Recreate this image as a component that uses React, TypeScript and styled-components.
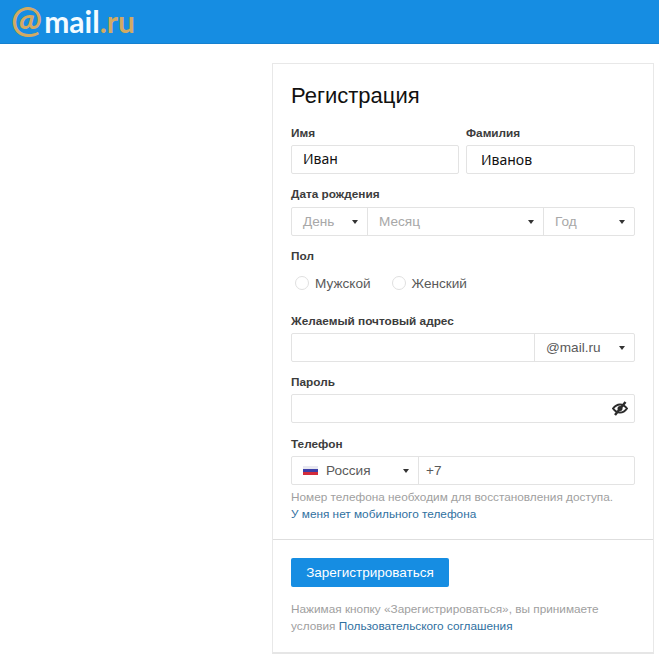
import React from "react";
import styled, { createGlobalStyle } from "styled-components";

const Global = createGlobalStyle`
  html, body { margin: 0; padding: 0; background: #fff; }
  body { font-family: "Liberation Sans", Arial, sans-serif; }
  * { box-sizing: border-box; }
`;

const Page = styled.div`
  width: 659px;
  height: 658px;
  overflow: hidden;
  background: #fff;
`;

const Header = styled.header`
  height: 44px;
  background: #168de2;
  border-bottom: 1px solid #1580cf;
  display: flex;
  align-items: center;
  padding-left: 11px;
  padding-bottom: 2px;
`;

const Logo = styled.div`
  display: flex;
  align-items: center;
  font-family: "Lato", sans-serif;
  font-size: 30px;
  line-height: 36px;
  font-weight: 700;
  color: #f4fbff;
`;

const LogoAt = styled.span`
  color: #d2aa63;
  font-size: 37px;
  font-weight: 700;
  margin: -5px 2px -5px 0;
  line-height: 46px;
  transform: translateY(-2px);
`;

const LogoAccent = styled.span`
  color: #d2aa63;
`;

const Main = styled.main`
  padding: 19px 5px 0 272px;
`;

const Card = styled.section`
  width: 382px;
  height: 591px;
  border: 1px solid #e8e8e8;
  border-bottom: 2px solid #e6e6e6;
  background: #fff;
`;

const FormArea = styled.div`
  padding: 16px 18px 0;
  height: 476px;
  border-bottom: 1px solid #dedede;
`;

const Title = styled.h1`
  margin: 0 0 14px;
  font-size: 22px;
  line-height: 32px;
  font-weight: 400;
  color: #111;
`;

const Field = styled.div<{ $gap?: number }>`
  margin-bottom: ${(p) => p.$gap ?? 14}px;
`;

const NameRow = styled.div`
  display: grid;
  grid-template-columns: 168px 169px;
  column-gap: 7px;
`;

const Label = styled.div<{ $lift?: number }>`
  height: 19px;
  font-size: 11.8px;
  line-height: ${(p) => 14 - (p.$lift ?? 0) * 2}px;
  font-weight: 700;
  color: #3c3c3c;
`;

const Box = styled.div`
  height: 29px;
  width: 100%;
  border: 1px solid #e3e3e3;
  border-radius: 2px;
  display: flex;
  align-items: stretch;
  background: #fff;
`;

const NameValue = styled.div<{ $pad: number; $drop?: number }>`
  display: flex;
  align-items: center;
  padding-left: ${(p) => p.$pad}px;
  padding-top: ${(p) => p.$drop ?? 0}px;
  padding-bottom: 3px;
  font-family: "Noto Sans", sans-serif;
  font-size: 14px;
  color: #111;
`;

const Cell = styled.div<{ $w?: number; $muted?: boolean; $pad?: number }>`
  ${(p) => (p.$w ? `width: ${p.$w}px; flex: none;` : "flex: 1;")}
  display: flex;
  align-items: center;
  justify-content: space-between;
  padding: 0 9px 1px ${(p) => p.$pad ?? 11}px;
  font-size: 13.6px;
  color: ${(p) => (p.$muted ? "#a8a8a8" : "#5a5a5a")};
  & + & {
    border-left: 1px solid #e3e3e3;
  }
`;

const Caret = styled.span`
  width: 0;
  height: 0;
  margin-top: 1px;
  border-left: 3.5px solid transparent;
  border-right: 3.5px solid transparent;
  border-top: 4px solid #333;
`;

const Radios = styled.div`
  height: 28px;
  display: flex;
  align-items: center;
  padding-left: 4px;
  gap: 21px;
`;

const RadioLabel = styled.div`
  display: flex;
  align-items: center;
  gap: 6px;
  font-size: 13.6px;
  color: #5a5a5a;
`;

const RadioDot = styled.span`
  width: 14px;
  height: 14px;
  border-radius: 50%;
  border: 1px solid #e0e0e0;
  background: #fff;
`;

const EyeCell = styled.div`
  margin-left: auto;
  display: flex;
  align-items: center;
  padding-right: 6px;
`;

const Flag = styled.svg`
  width: 15px;
  height: 9px;
  margin-right: 8px;
  flex: none;
`;

const CountryName = styled.span`
  flex: 1;
`;

const Hint = styled.div`
  margin-top: 4px;
  font-size: 11.8px;
  line-height: 17px;
  color: #a0a0a0;
`;

const TextLink = styled.a`
  color: #30709f;
  text-decoration: none;
`;

const Footer = styled.div`
  padding: 18px 18px 0;
`;

const Button = styled.button`
  display: block;
  width: 158px;
  height: 29px;
  padding: 0;
  border: none;
  border-radius: 2px;
  background: #168de2;
  color: #fff;
  font-family: inherit;
  font-size: 13.5px;
`;

const Terms = styled.p`
  margin: 14px 0 0;
  font-size: 11.8px;
  line-height: 16.5px;
  color: #a0a0a0;
`;

const EyeOff = () => (
  <svg width="16" height="15" viewBox="0 0 16 15" fill="none">
    <path d="M1 7.5C3 4.8 5.4 3.4 8 3.4s5 1.4 7 4.1c-2 2.7-4.4 4.1-7 4.1S3 10.2 1 7.5Z" stroke="#2b2b2b" strokeWidth="2" />
    <circle cx="8" cy="7.5" r="2.5" fill="#2b2b2b" />
    <path d="M13.5 1 3 14" stroke="#2b2b2b" strokeWidth="2.4" />
  </svg>
);

export default function App() {
  return (
    <Page>
      <Global />
      <Header>
        <Logo>
          <LogoAt>@</LogoAt>
          <span>mail</span>
          <LogoAccent>.ru</LogoAccent>
        </Logo>
      </Header>
      <Main>
        <Card>
          <FormArea>
            <Title>Регистрация</Title>
            <Field>
              <NameRow>
                <div>
                  <Label>Имя</Label>
                  <Box><NameValue $pad={11}>Иван</NameValue></Box>
                </div>
                <div>
                  <Label>Фамилия</Label>
                  <Box><NameValue $pad={14} $drop={3}>Иванов</NameValue></Box>
                </div>
              </NameRow>
            </Field>
            <Field>
              <Label $lift={1}>Дата рождения</Label>
              <Box>
                <Cell $w={75} $muted>День<Caret /></Cell>
                <Cell $muted>Месяц<Caret /></Cell>
                <Cell $w={91} $muted>Год<Caret /></Cell>
              </Box>
            </Field>
            <Field $gap={17}>
              <Label $lift={1}>Пол</Label>
              <Radios>
                <RadioLabel><RadioDot />Мужской</RadioLabel>
                <RadioLabel><RadioDot />Женский</RadioLabel>
              </Radios>
            </Field>
            <Field $gap={13}>
              <Label>Желаемый почтовый адрес</Label>
              <Box>
                <Cell />
                <Cell $w={100}>@mail.ru<Caret /></Cell>
              </Box>
            </Field>
            <Field>
              <Label>Пароль</Label>
              <Box>
                <EyeCell><EyeOff /></EyeCell>
              </Box>
            </Field>
            <Field $gap={0}>
              <Label>Телефон</Label>
              <Box>
                <Cell $w={126}>
                  <Flag viewBox="0 0 15 9">
                    <rect width="15" height="3" fill="#e8e8f0" />
                    <rect y="3" width="15" height="3" fill="#3b3fa8" />
                    <rect y="6" width="15" height="3" fill="#d22b3c" />
                  </Flag>
                  <CountryName>Россия</CountryName>
                  <Caret />
                </Cell>
                <Cell $pad={7}>+7</Cell>
              </Box>
              <Hint>
                Номер телефона необходим для восстановления доступа.
                <br />
                <TextLink href="#">У меня нет мобильного телефона</TextLink>
              </Hint>
            </Field>
          </FormArea>
          <Footer>
            <Button>Зарегистрироваться</Button>
            <Terms>
              Нажимая кнопку «Зарегистрироваться», вы принимаете
              <br />
              условия <TextLink href="#">Пользовательского соглашения</TextLink>
            </Terms>
          </Footer>
        </Card>
      </Main>
    </Page>
  );
}
